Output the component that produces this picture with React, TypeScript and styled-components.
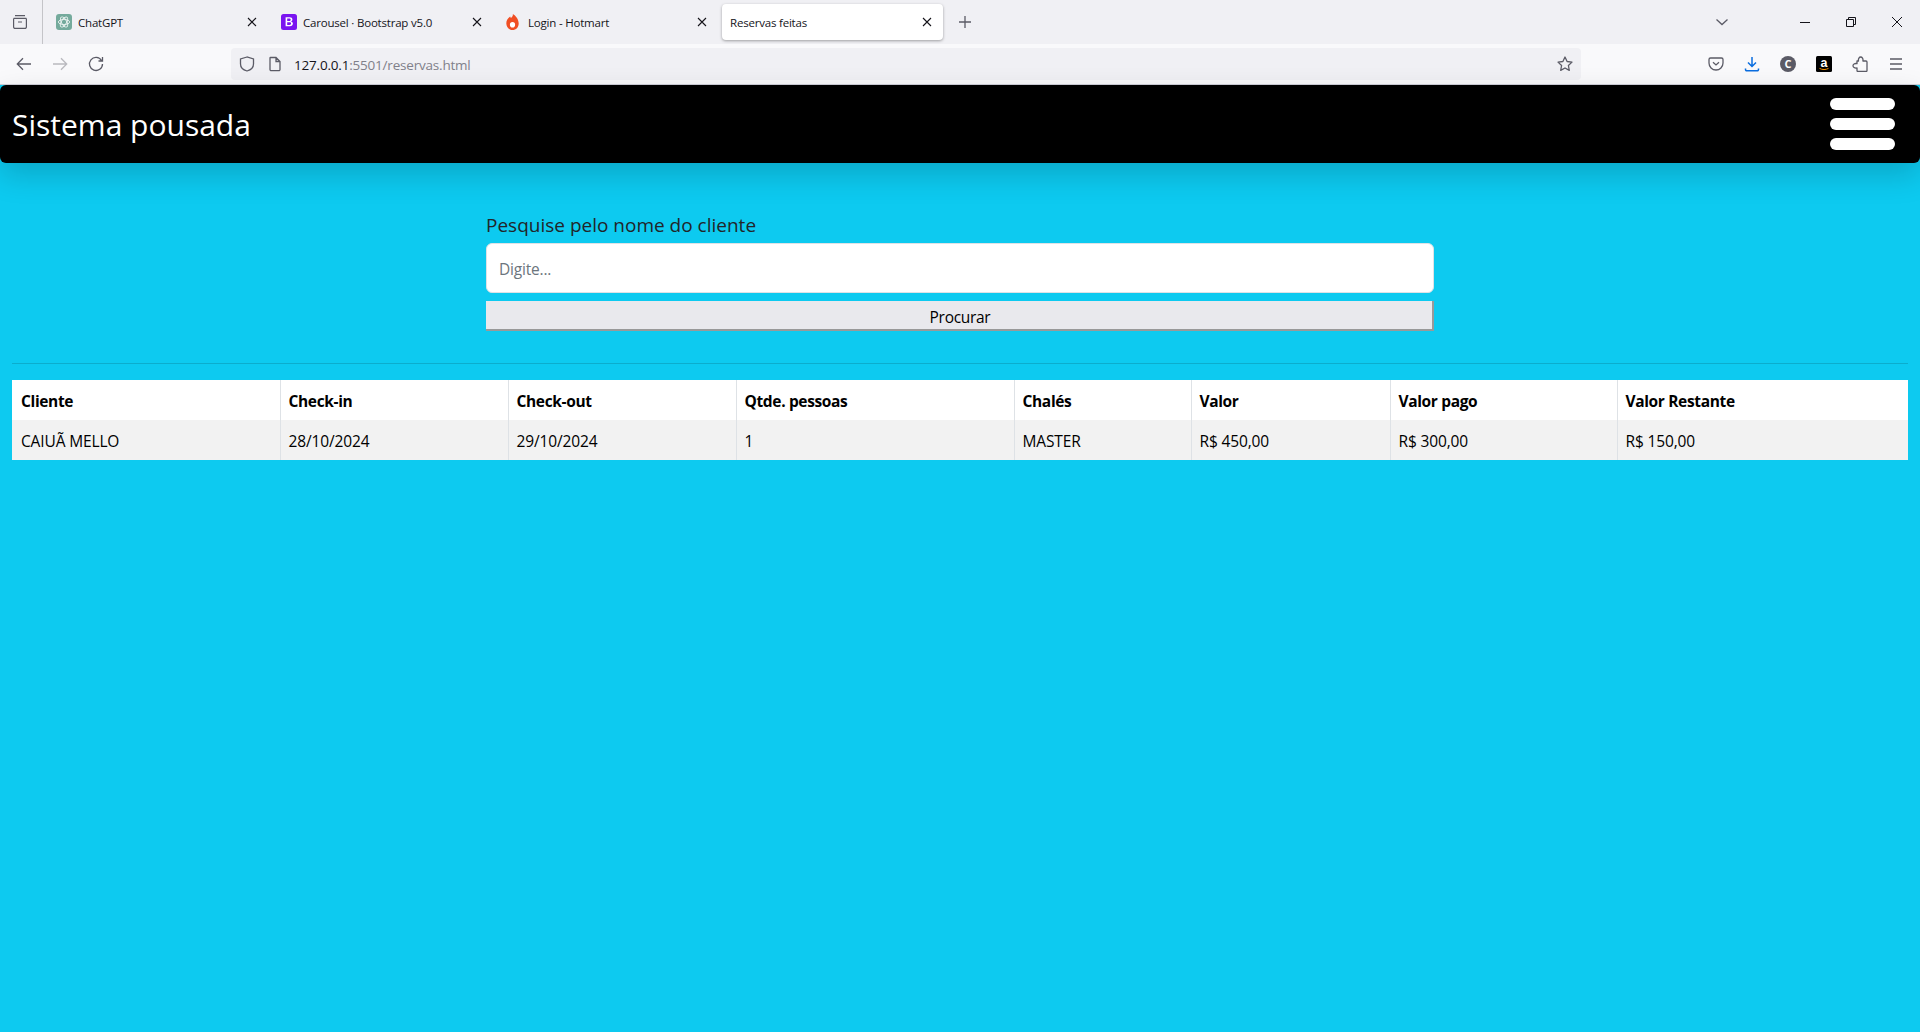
import React from "react";
import styled, { createGlobalStyle } from "styled-components";

const Global = createGlobalStyle`
  html, body { margin: 0; padding: 0; height: 100%; overflow: hidden; }
  body { background: #0dcaf0; font-family: "Open Sans", "Noto Sans", "Liberation Sans", sans-serif; }
  * { box-sizing: border-box; }
`;

const Page = styled.div`display: flex; flex-direction: column; height: 1032px;`;
const TabStrip = styled.div`display: flex; align-items: center; height: 44px; background: #f0f0f4; color: #15141a;`;
const ListAll = styled.div`
  width: 43px; height: 44px; padding-left: 12px; display: flex; align-items: center;
  border-right: 1px solid #c4c4c8; color: #5b5b66; margin-right: 4px; flex: none;
`;
const Tabs = styled.div`display: flex; gap: 4px; align-items: center;`;
const Tab = styled.div<{ $active?: boolean }>`
  width: 221px; height: 36px; padding: 0 8px; display: flex; align-items: center; position: relative;
  border-radius: 4px; font-size: 11.5px; letter-spacing: -0.2px;
  background: ${(p) => (p.$active ? "#fff" : "transparent")};
  box-shadow: ${(p) => (p.$active ? "0 1px 3px rgba(0,0,0,.35)" : "none")};
`;
const Favicon = styled.span`width: 16px; height: 16px; margin: 0 6px 0 1px; flex: none; display: flex; align-items: center; justify-content: center;`;
const FlameSlot = styled(Favicon)`width: 13px; margin-right: 9px;`;
const TabTitle = styled.span`flex: 1; white-space: nowrap;`;
const TabClose = styled.span`position: absolute; left: 199px; top: 12px; width: 12px; height: 12px; display: flex;`;
const NewTab = styled.div`width: 16px; margin-left: 15px; display: flex; color: #5b5b66;`;
const StripEnd = styled.div`margin-left: auto; display: flex; align-items: center; color: #15141a;`;
const Chevron = styled.span`display: flex; margin-right: 53px; color: #5b5b66;`;
const WinButton = styled.span`width: 46px; display: flex; justify-content: center;`;

const Toolbar = styled.div`
  display: flex; align-items: center; height: 41px; padding: 0 6px 1px; background: #f9f9fb;
  border-bottom: 1px solid #cfcfd8; color: #5b5b66;
`;
const ToolButton = styled.span<{ $dim?: boolean }>`
  width: 36px; height: 36px; flex: none; display: flex; align-items: center; justify-content: center;
  opacity: ${(p) => (p.$dim ? 0.4 : 1)};
`;
const UrlBar = styled.div`
  flex: 1; height: 32px; margin: 0 117px 0 117px; padding: 0 8px; border-radius: 4px; background: #f0f0f4;
  display: flex; align-items: center; font-size: 13.5px; letter-spacing: -0.2px; color: #15141a;
`;
const UrlIcon = styled.span<{ $gap: number }>`display: flex; margin-right: ${(p) => p.$gap}px; flex: none;`;
const UrlText = styled.span`display: flex; flex: 1; padding-top: 2px;`;
const UrlHost = styled.span`color: #15141a;`;
const UrlRest = styled.span`color: #80808a;`;

const Navbar = styled.header`
  height: 78px; flex: none; background: #000; border-radius: 6px; padding: 0 25px 0 12px;
  display: flex; align-items: center; justify-content: space-between;
  box-shadow: 0 12px 30px rgba(0,0,0,.17); position: relative;
`;
const Brand = styled.h1`margin: 0; color: #fff; font-size: 30px; font-weight: 400;`;
const Burger = styled.div`display: flex; flex-direction: column; gap: 8px;`;
const BurgerBar = styled.span`display: block; width: 65px; height: 12px; background: #fff; border-radius: 6px;`;

const Main = styled.main`padding: 0 12px;`;
const SearchForm = styled.form`width: 948px; margin: 0 auto; padding-top: 48px;`;
const SearchLabel = styled.label`
  display: block; height: 32px; line-height: 28px; font-size: 19px; color: #212529;
`;
const SearchInput = styled.input`
  display: block; width: 100%; height: 50px; padding: 2px 12px 0; border: 1px solid #dee2e6; border-radius: 6px;
  font: 400 15.5px "Open Sans", sans-serif; letter-spacing: -0.2px; background: #fff; outline: 0;
  &::placeholder { color: #6c757d; opacity: 1; }
`;
const SearchButton = styled.button`
  display: block; width: 100%; height: 30px; margin-top: 8px; padding: 4px 0 0 2px; background: #e9e9ed; color: #000;
  border: 0; border-right: 2px solid #999; border-bottom: 2px solid #999;
  font: 400 15.5px "Open Sans", sans-serif; letter-spacing: -0.3px;
`;
const Rule = styled.hr`margin: 32px 0 16px; border: 0; border-top: 1px solid #0badcd;`;

const Table = styled.table`
  width: 1896px; border-collapse: collapse; table-layout: fixed; background: #fff; color: #000;
  font-size: 15.5px; letter-spacing: -0.35px;
`;
const Th = styled.th`
  height: 40px; padding: 2px 8px 0; text-align: left; font-weight: 700; background: #fff;
  border-left: 1px solid #dee2e6; &:first-child { border-left: 0; padding-left: 9px; }
`;
const Td = styled.td`
  height: 40px; padding: 2px 8px 0; background: #f2f2f2; letter-spacing: -0.14px;
  border-left: 1px solid #dee2e6; &:first-child { border-left: 0; padding-left: 9px; }
`;

const X = () => (
  <svg width="12" height="12" viewBox="0 0 12 12" fill="none" stroke="#15141a" strokeWidth="1.1">
    <path d="M2 2l8 8M10 2l-8 8" />
  </svg>
);

const GptIcon = () => (
  <svg width="16" height="16" viewBox="0 0 16 16">
    <rect width="16" height="16" rx="3" fill="#74aa9c" />
    <g fill="none" stroke="#fff" strokeWidth="0.9" opacity="0.85">
      <ellipse cx="8" cy="8" rx="5.6" ry="2.6" />
      <ellipse cx="8" cy="8" rx="5.6" ry="2.6" transform="rotate(60 8 8)" />
      <ellipse cx="8" cy="8" rx="5.6" ry="2.6" transform="rotate(120 8 8)" />
    </g>
  </svg>
);
const BootIcon = () => (
  <svg width="16" height="16" viewBox="0 0 16 16">
    <rect width="16" height="16" rx="2.5" fill="#7a14f0" />
    <path fill="#fff" fillRule="evenodd" d="M4.6 3.2h4.1c1.7 0 2.7.9 2.7 2.2 0 1-.6 1.7-1.5 1.9v.1c1.2.1 2 1 2 2.2 0 1.6-1.2 2.6-3.1 2.6H4.6V3.2zm1.6 1.3v2.5h1.9c1 0 1.6-.5 1.6-1.3s-.5-1.2-1.5-1.2h-2zm0 3.7v2.8h2.2c1.1 0 1.7-.5 1.7-1.4s-.6-1.4-1.8-1.4H6.200z" />
  </svg>
);
const FlameIcon = () => (
  <svg width="13" height="16" viewBox="0 0 13 16">
    <path fill="#f04e23" d="M6.800 0c.4 2-.6 3-1.800 4.100C4.500 3.500 4.300 3 4.200 2.500 1.900 4.200.3 6.300.3 9.300.3 13 3 16 6.500 16s6.200-2.900 6.200-6.600C12.700 5.300 9.800 1.700 6.800 0z" />
    <ellipse cx="6.500" cy="10.700" rx="2.600" ry="2.800" fill="#fff" />
  </svg>
);

const columns = [268, 228, 228, 278, 177, 199, 227, 291];
const heads = ["Cliente", "Check-in", "Check-out", "Qtde. pessoas", "Chalés", "Valor", "Valor pago", "Valor Restante"];
const cells = ["CAIUÃ MELLO", "28/10/2024", "29/10/2024", "1", "MASTER", "R$ 450,00", "R$ 300,00", "R$ 150,00"];

export default function App() {
  return (
    <Page>
      <Global />
      <TabStrip>
        <ListAll>
          <svg width="16" height="16" viewBox="0 0 16 16" fill="none" stroke="currentColor" strokeWidth="1.2">
            <path d="M3 1.600h10M1.600 4.400h12.800M1.600 4.400v8.500a1.500 1.500 0 0 0 1.500 1.500h9.800a1.500 1.500 0 0 0 1.500-1.500V4.400M6 8h4" />
          </svg>
        </ListAll>
        <Tabs>
          <Tab><Favicon><GptIcon /></Favicon><TabTitle>ChatGPT</TabTitle><TabClose><X /></TabClose></Tab>
          <Tab><Favicon><BootIcon /></Favicon><TabTitle>Carousel · Bootstrap v5.0</TabTitle><TabClose><X /></TabClose></Tab>
          <Tab><FlameSlot><FlameIcon /></FlameSlot><TabTitle>Login - Hotmart</TabTitle><TabClose><X /></TabClose></Tab>
          <Tab $active><TabTitle>Reservas feitas</TabTitle><TabClose><X /></TabClose></Tab>
        </Tabs>
        <NewTab>
          <svg width="14" height="14" viewBox="0 0 14 14" fill="none" stroke="currentColor" strokeWidth="1.3"><path d="M7 1v12M1 7h12" /></svg>
        </NewTab>
        <StripEnd>
          <Chevron>
            <svg width="14" height="10" viewBox="0 0 14 10" fill="none" stroke="currentColor" strokeWidth="1.3"><path d="M1.500 2.500L7 7.500l5.500-5" /></svg>
          </Chevron>
          <WinButton><svg width="12" height="12" viewBox="0 0 12 12" stroke="currentColor" fill="none"><path d="M1 6.500h10" /></svg></WinButton>
          <WinButton><svg width="12" height="12" viewBox="0 0 12 12" stroke="currentColor" fill="none"><path d="M1.500 3.500h7v7h-7zM3.500 3.500v-2h7v7h-2" /></svg></WinButton>
          <WinButton><svg width="12" height="12" viewBox="0 0 12 12" stroke="currentColor" fill="none"><path d="M1 1l10 10M11 1L1 11" /></svg></WinButton>
        </StripEnd>
      </TabStrip>
      <Toolbar>
        <ToolButton>
          <svg width="16" height="16" viewBox="0 0 16 16" fill="none" stroke="currentColor" strokeWidth="1.3"><path d="M15 8H1.500M7 2.300L1.300 8 7 13.700" /></svg>
        </ToolButton>
        <ToolButton $dim>
          <svg width="16" height="16" viewBox="0 0 16 16" fill="none" stroke="currentColor" strokeWidth="1.3"><path d="M1 8h13.500M9 2.300L14.700 8 9 13.700" /></svg>
        </ToolButton>
        <ToolButton>
          <svg width="16" height="16" viewBox="0 0 16 16" fill="none" stroke="currentColor" strokeWidth="1.3"><path d="M13.500 4.500A6.500 6.500 0 1 0 14.500 8M14.500 1v4h-4" /></svg>
        </ToolButton>
        <UrlBar>
          <UrlIcon $gap={12}>
            <svg width="16" height="16" viewBox="0 0 16 16" fill="none" stroke="currentColor" strokeWidth="1.3" color="#5b5b66"><path d="M8 1L1.500 3v5c0 3.500 3 6 6.500 7 3.500-1 6.500-3.500 6.500-7V3L8 1z" /></svg>
          </UrlIcon>
          <UrlIcon $gap={11}>
            <svg width="16" height="16" viewBox="0 0 16 16" fill="none" stroke="currentColor" strokeWidth="1.3" color="#5b5b66"><path d="M3.500 1.500h5.500L13 5.500v8a1.200 1.200 0 0 1-1.200 1.200H4.200A1.200 1.200 0 0 1 3 13.500V2a.5.5 0 0 1 .5-.5zM9 1.500v4h4" /></svg>
          </UrlIcon>
          <UrlText>
            <UrlHost>127.0.0.1</UrlHost>
            <UrlRest>:5501/reservas.html</UrlRest>
          </UrlText>
          <UrlIcon $gap={0}>
            <svg width="16" height="16" viewBox="0 0 16 16" fill="none" stroke="currentColor" strokeWidth="1.3" strokeLinejoin="round" color="#5b5b66"><path d="M8 1l2.100 4.500 4.900.6-3.600 3.400.9 4.900L8 12l-4.300 2.400.9-4.900L1 6.100l4.900-.6L8 1z" /></svg>
          </UrlIcon>
        </UrlBar>
        <ToolButton>
          <svg width="16" height="16" viewBox="0 0 16 16" fill="none" stroke="currentColor" strokeWidth="1.300"><path d="M2.500 2h11A1.500 1.500 0 0 1 15 3.500V7a7 7 0 0 1-14 0V3.500A1.500 1.500 0 0 1 2.500 2zM5 6.300L8 9l3-2.700" /></svg>
        </ToolButton>
        <ToolButton>
          <svg width="16" height="16" viewBox="0 0 16 16" fill="none" stroke="#0a6ddf" strokeWidth="1.500"><path d="M8 1v9.500M4 6.500l4 4 4-4M1.500 12.500v1a1.200 1.200 0 0 0 1.200 1.200h10.600a1.200 1.200 0 0 0 1.200-1.200v-1" /></svg>
        </ToolButton>
        <ToolButton>
          <svg width="16" height="16" viewBox="0 0 16 16"><circle cx="8" cy="8" r="8" fill="#5b5b66" /><text x="8" y="12" textAnchor="middle" fontSize="11" fontWeight="700" fontFamily="'Open Sans', sans-serif" fill="#fff">C</text></svg>
        </ToolButton>
        <ToolButton>
          <svg width="16" height="16" viewBox="0 0 16 16"><rect width="16" height="16" rx="1.500" fill="#000" /><text x="8" y="11" textAnchor="middle" fontSize="12.500" fontWeight="700" fontFamily="'Liberation Sans', sans-serif" fill="#fff">a</text><path d="M3.500 12.400c2.800 1.500 6.300 1.500 9 0" fill="none" stroke="#f90" strokeWidth="1" /></svg>
        </ToolButton>
        <ToolButton>
          <svg width="16" height="16" viewBox="0 0 16 16" fill="none" stroke="currentColor" strokeWidth="1.300" strokeLinejoin="round"><path d="M5 5h1.500c-.5-2.500.9-4 2.200-4s2.700 1.500 2.200 4H14a1 1 0 0 1 1 1v8.500a1 1 0 0 1-1 1H6a1 1 0 0 1-1-1V12c-2.500.5-4-1-4-2.200S2.500 7.100 5 7.600V5z" /></svg>
        </ToolButton>
        <ToolButton>
          <svg width="16" height="16" viewBox="0 0 16 16" fill="none" stroke="currentColor" strokeWidth="1.300"><path d="M2 3h12M2 8h12M2 13h12" /></svg>
        </ToolButton>
      </Toolbar>
      <Navbar>
        <Brand>Sistema pousada</Brand>
        <Burger><BurgerBar /><BurgerBar /><BurgerBar /></Burger>
      </Navbar>
      <Main>
        <SearchForm onSubmit={(e) => e.preventDefault()}>
          <SearchLabel htmlFor="busca">Pesquise pelo nome do cliente</SearchLabel>
          <SearchInput id="busca" placeholder="Digite..." />
          <SearchButton type="button">Procurar</SearchButton>
        </SearchForm>
        <Rule />
        <Table>
          <colgroup>{columns.map((w, i) => <col key={i} style={{ width: w }} />)}</colgroup>
          <thead><tr>{heads.map((h) => <Th key={h}>{h}</Th>)}</tr></thead>
          <tbody><tr>{cells.map((c, i) => <Td key={i}>{c}</Td>)}</tr></tbody>
        </Table>
      </Main>
    </Page>
  );
}
